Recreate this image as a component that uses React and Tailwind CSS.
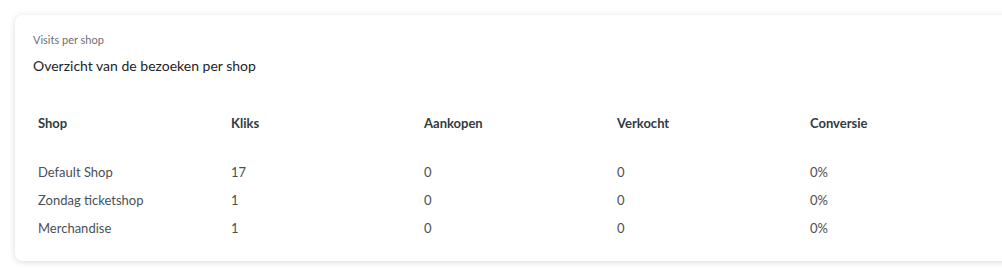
const rows = [
  { shop: "Default Shop", kliks: 17, aankopen: 0, verkocht: 0, conversie: "0%" },
  { shop: "Zondag ticketshop", kliks: 1, aankopen: 0, verkocht: 0, conversie: "0%" },
  { shop: "Merchandise", kliks: 1, aankopen: 0, verkocht: 0, conversie: "0%" },
];

const headers = ["Shop", "Kliks", "Aankopen", "Verkocht", "Conversie"];

export default function App() {
  return (
    <div className="min-h-screen bg-white pt-[15px] pl-[15px] overflow-hidden font-['Lato',sans-serif]">
      <div className="w-[1001px] bg-white rounded-lg shadow-[0_1px_6px_rgba(0,0,0,0.15)] px-[18px] pt-[17px] pb-[19px]">
        <p className="text-[11px] leading-4 text-[#6c6f75]">Visits per shop</p>
        <p className="mt-[8px] text-[14px] leading-5 text-[#212529]">
          Overzicht van de bezoeken per shop
        </p>

        <table className="mt-[32px] w-full table-fixed text-[13px]">
          <thead>
            <tr>
              {headers.map((h) => (
                <th
                  key={h}
                  className="px-[5px] pt-[6px] pb-[24px] text-left font-bold text-[#343a40]"
                >
                  {h}
                </th>
              ))}
            </tr>
          </thead>
          <tbody className="text-[#495057]">
            {rows.map((r) => (
              <tr key={r.shop}>
                <td className="px-[5px] py-[5px] leading-[18px]">{r.shop}</td>
                <td className="px-[5px] py-[5px] leading-[18px]">{r.kliks}</td>
                <td className="px-[5px] py-[5px] leading-[18px]">{r.aankopen}</td>
                <td className="px-[5px] py-[5px] leading-[18px]">{r.verkocht}</td>
                <td className="px-[5px] py-[5px] leading-[18px]">{r.conversie}</td>
              </tr>
            ))}
          </tbody>
        </table>
      </div>
    </div>
  );
}
